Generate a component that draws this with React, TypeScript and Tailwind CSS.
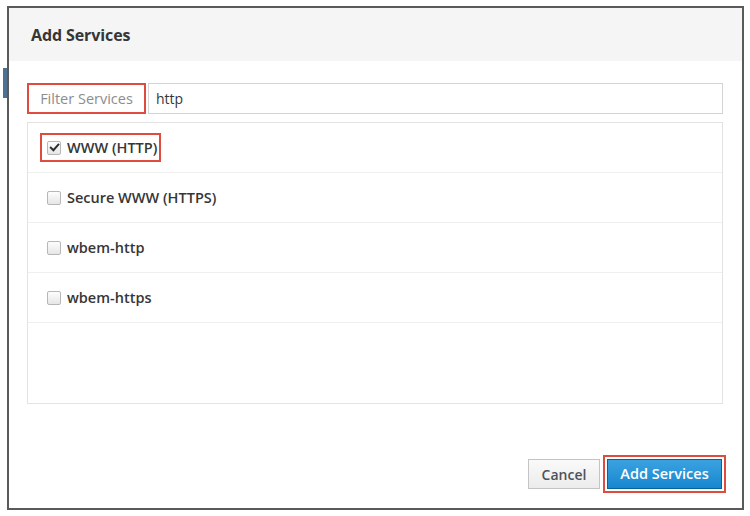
import { useState } from 'react';

const services = ['WWW (HTTP)', 'Secure WWW (HTTPS)', 'wbem-http', 'wbem-https'];

const Check = ({ checked }: { checked: boolean }) => (
  <span className="w-[14px] h-[14px] rounded-[2px] border border-[#b7b7b7] bg-gradient-to-b from-[#fdfdfd] to-[#e6e6e6] flex items-center justify-center shrink-0">
    {checked && (
      <svg width="11" height="11" viewBox="0 0 12 12">
        <path d="M2 6.2 L4.8 9 L10.2 2.8" fill="none" stroke="#2d2d2d" strokeWidth="2.1" strokeLinecap="square" />
      </svg>
    )}
  </span>
);

export default function App() {
  const [selected] = useState<string[]>(['WWW (HTTP)']);

  return (
    <div className="relative w-[750px] h-[516px] bg-white overflow-hidden font-['Open_Sans',sans-serif]">
      {/* page behind the modal */}
      <div className="absolute left-[3px] top-[68px] w-[4px] h-[30px] bg-[#1f4d78] opacity-80" />

      <div className="ml-[7px] mt-[6px] w-[737px] h-[504px] border-2 border-[#5a5a5a] bg-white flex flex-col">
        {/* Header */}
        <div className="h-[53px] bg-[#f5f5f5] pl-[22px] flex items-center">
          <h1 className="text-[16px] font-bold text-[#363636] tracking-[-0.1px]">Add Services</h1>
        </div>

        {/* Body */}
        <div className="flex-1 flex flex-col pl-[18px] pr-[19px] pt-[22px]">
          <div className="flex h-[31px] gap-[2px]">
            <div className="w-[119px] border-2 border-[#de4b3f] flex items-center justify-center text-[14.5px] text-[#8b8d8f]">
              Filter Services
            </div>
            <div className="flex-1 border border-[#d4d4d4] flex items-center pl-[7px] text-[14px] text-[#363636]">
              http
            </div>
          </div>

          <div className="mt-[8px] h-[282px] border border-[#e3e3e3]">
            {services.map((s) => (
              <div key={s} className="h-[50px] border-b border-[#efefef] flex items-center pl-[19px]">
                {selected.includes(s) ? (
                  <div className="flex items-center gap-[6px] border-2 border-[#de4b3f] h-[29px] pl-[5px] pr-[2px] -ml-[7px]">
                    <Check checked />
                    <span className="text-[14.5px] font-semibold text-[#363636]">{s}</span>
                  </div>
                ) : (
                  <div className="flex items-center gap-[6px]">
                    <Check checked={false} />
                    <span className="text-[14.5px] font-semibold text-[#363636]">{s}</span>
                  </div>
                )}
              </div>
            ))}
          </div>

          {/* Footer */}
          <div className="mt-auto pb-[15px] flex justify-end items-center gap-[3px]">
            <button className="w-[72px] h-[30px] border border-[#c4c4c4] bg-gradient-to-b from-[#fafafa] to-[#ececec] text-[14px] font-semibold text-[#4d5258]">
              Cancel
            </button>
            <div className="border-2 border-[#de4b3f] p-[2px] -mr-[3px]">
              <button className="w-[115px] h-[30px] border border-[#00659c] bg-gradient-to-b from-[#3aa2e0] to-[#1587cf] text-[14.5px] font-semibold text-white">
                Add Services
              </button>
            </div>
          </div>
        </div>
      </div>
    </div>
  );
}
